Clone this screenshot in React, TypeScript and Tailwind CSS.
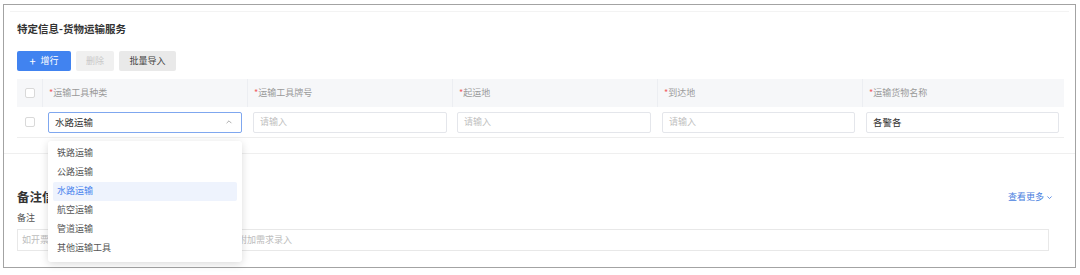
import React from 'react';

const columns = ['运输工具种类', '运输工具牌号', '起运地', '到达地', '运输货物名称'];
const options = ['铁路运输', '公路运输', '水路运输', '航空运输', '管道运输', '其他运输工具'];

function Checkbox() {
  return <span className="block w-[10px] h-[10px] rounded-[2px] border border-[#d9d9d9] bg-white" />;
}

function TextInput({ value }: { value?: string }) {
  return (
    <div className="h-[21px] border border-[#e4e6eb] rounded-[2px] bg-white flex items-center px-[6px]">
      {value ? (
        <span className="text-[9.5px] text-[#333]">{value}</span>
      ) : (
        <span className="text-[9px] text-[#bfbfbf]">请输入</span>
      )}
    </div>
  );
}

function Dropdown() {
  return (
    <div className="absolute left-0 top-[calc(100%+8px)] w-[194px] h-[121px] bg-white rounded-[3px] shadow-[0_2px_8px_rgba(0,0,0,0.15)] py-[3px] px-[5px] z-10">
      {options.map((o) => (
        <div
          key={o}
          className={
            o === '水路运输'
              ? 'h-[19px] flex items-center px-[4px] rounded-[2px] bg-[#eef3fd] text-[#4a84ee] text-[9px]'
              : 'h-[19px] flex items-center px-[4px] text-[#555] text-[9px]'
          }
        >
          {o}
        </div>
      ))}
    </div>
  );
}

export default function App() {
  return (
    <div className="w-[1080px] h-[275px] bg-white overflow-hidden font-['Noto_Sans_CJK_SC',sans-serif]">
      <div className="ml-[3px] mt-[4px] w-[1073px] h-[264px] border border-[#a3a3a3] flex flex-col">
        <div className="mx-[6px] mt-[6px] border-t border-[#f3f3f3]" />
        <div className="pl-[13px] pr-[10px] flex flex-col">
          <div className="mt-[10px] h-[14px] leading-[14px] text-[10.5px] font-bold text-[#333]">特定信息-货物运输服务</div>
          <div className="mt-[15px] flex gap-[5px]">
            <button className="w-[54px] h-[20px] rounded-[2px] bg-[#4183f0] text-white text-[9px] flex items-center justify-center gap-[5px]">
              <span className="text-[11px] leading-none">+</span>
              <span>增行</span>
            </button>
            <button className="w-[38px] h-[20px] rounded-[2px] bg-[#f0f0f0] text-[#c8c8c8] text-[9px]">删除</button>
            <button className="w-[57px] h-[20px] rounded-[2px] bg-[#e9e9e9] text-[#444] text-[9px]">批量导入</button>
          </div>
          <div className="mt-[8px] w-[1047px]">
            <div className="h-[28px] bg-[#f6f7f9] flex items-center">
              <div className="w-[25px] flex justify-center">
                <Checkbox />
              </div>
              {columns.map((c, i) => (
                <div
                  key={c}
                  className={
                    i === 4
                      ? 'flex-1 h-full flex items-center pl-[6px] border-l border-[#eceef2] text-[9px] text-[#9a9a9a]'
                      : 'w-[205px] h-full flex items-center pl-[6px] border-l border-[#eceef2] text-[9px] text-[#9a9a9a]'
                  }
                >
                  <span className="text-[#f0625f]">*</span>
                  {c}
                </div>
              ))}
            </div>
            <div className="h-[31px] flex items-center border-b border-[#eeeeee]">
              <div className="w-[25px] flex justify-center">
                <Checkbox />
              </div>
              <div className="w-[205px] pl-[6px] pr-[5px]">
                <div className="relative">
                  <div className="h-[21px] border border-[#7fa7ef] rounded-[2px] bg-white flex items-center justify-between px-[6px]">
                    <span className="text-[9.5px] text-[#333]">水路运输</span>
                    <svg width="8" height="8" viewBox="0 0 10 10" className="mr-[2px]">
                      <path d="M2 6.5 L5 3.5 L8 6.5" fill="none" stroke="#aaa" strokeWidth="1.2" />
                    </svg>
                  </div>
                  <Dropdown />
                </div>
              </div>
              <div className="w-[205px] pl-[6px] pr-[5px]">
                <TextInput />
              </div>
              <div className="w-[204px] pl-[5px] pr-[5px]">
                <TextInput />
              </div>
              <div className="w-[204px] pl-[6px] pr-[5px]">
                <TextInput />
              </div>
              <div className="flex-1 pl-[6px] pr-[5px]">
                <TextInput value="各警各" />
              </div>
            </div>
          </div>
        </div>
        <div className="mt-[15px] border-t border-[#efefef]" />
        <div className="pl-[13px] pr-[26px] flex flex-col">
          <div className="mt-[35px] h-[16px] flex items-center justify-between">
            <span className="text-[12.5px] font-bold text-[#333]">备注信息</span>
            <span className="text-[9px] text-[#4a7fe0] flex items-center gap-[2px] mr-[-4px]">
              查看更多
              <svg width="7" height="7" viewBox="0 0 10 10">
                <path d="M2 3.5 L5 6.5 L8 3.5" fill="none" stroke="#4a7fe0" strokeWidth="1.2" />
              </svg>
            </span>
          </div>
          <div className="mt-[7px] text-[9px] text-[#555] leading-[12px]">备注</div>
          <div className="mt-[5px] h-[22px] border border-[#e8e8e8] flex items-center px-[4px]">
            <span className="text-[9px] text-[#bdbdbd] whitespace-nowrap">如开票需备注其他信息，请在此处详细填写，系统将按附加需求录入</span>
          </div>
        </div>
      </div>
    </div>
  );
}
